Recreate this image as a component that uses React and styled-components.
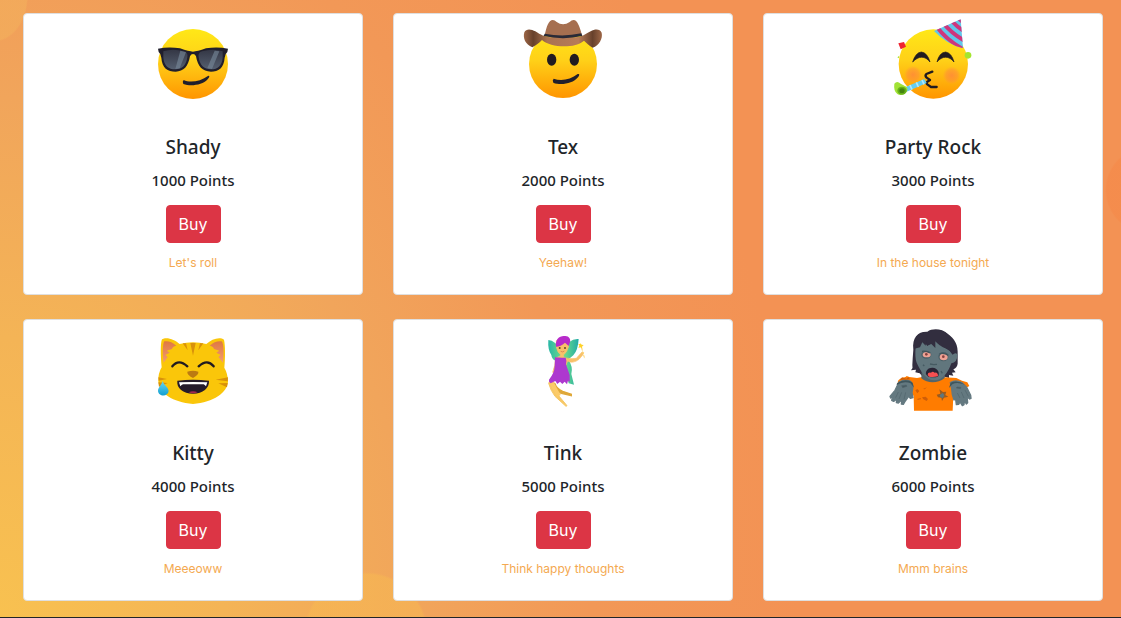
import React from "react";
import styled, { createGlobalStyle } from "styled-components";

const GlobalStyle = createGlobalStyle`
  *, *::before, *::after { box-sizing: border-box; }
  body {
    margin: 0;
    color: #212529;
    font-family: "Noto Sans", "Open Sans", sans-serif;
  }
`;

const Page = styled.div`
  background:
    radial-gradient(ellipse 34px 46px at -6px -4px, rgba(243, 176, 92, 0.6) 96%, transparent),
    radial-gradient(circle 44px at calc(100% + 28px) 190px, rgba(245, 138, 74, 0.7) 96%, transparent),
    radial-gradient(circle 62px at 366px calc(100% + 16px), rgba(248, 188, 80, 0.45) 96%, transparent),
    radial-gradient(ellipse 800px 1000px at 0 100%, #f8c150 0, #f4b456 28%, #f1a55b 52%, #f29857 74%, #f39254 100%);
`;

const Shop = styled.main`
  display: grid;
  grid-template-columns: repeat(3, 1fr);
  gap: 24px 30px;
  padding: 13px 18px 16px 23px;
`;

const Card = styled.article`
  display: flex;
  flex-direction: column;
  align-items: center;
  padding-bottom: 22px;
  background: #fff;
  border: 1px solid #dfdfdf;
  border-radius: 4px;
  text-align: center;
`;

const Picture = styled.svg`
  display: block;
  width: 96px;
  height: 96px;
`;

const Name = styled.h2`
  margin: 25px 0 0;
  font-size: 19px;
  font-weight: 500;
  line-height: 24px;
`;

const Price = styled.p`
  margin: 11px 0 0;
  font-size: 15px;
  font-weight: 500;
  line-height: 20px;
`;

const BuyButton = styled.button`
  width: 55px;
  height: 38px;
  margin-top: 15px;
  padding: 0;
  border: 1px solid #dc3545;
  border-radius: 4px;
  background: #dc3545;
  color: #fff;
  font-family: Inter, sans-serif;
  font-size: 16px;
  line-height: 24px;
  cursor: pointer;
`;

const Motto = styled.p`
  margin: 11px 0 0;
  color: #f4a951;
  font-family: Inter, sans-serif;
  font-size: 12px;
  line-height: 18px;
`;

const Footer = styled.footer`
  height: 1px;
  background: #212529;
`;

const FaceGradient = ({ id }) => (
  <defs>
    <linearGradient id={id} x1="0" y1="0" x2="0" y2="1">
      <stop offset="0" stopColor="#ffe817" />
      <stop offset="0.45" stopColor="#ffd018" />
      <stop offset="1" stopColor="#ff9500" />
    </linearGradient>
  </defs>
);

const Shady = () => (
  <Picture viewBox="15 12 288 288" role="img" aria-label="Face with sunglasses">
    <FaceGradient id="shadyFace" />
    <defs>
      <linearGradient id="lens" x1="0" y1="0" x2="0" y2="1">
        <stop offset="0" stopColor="#343745" />
        <stop offset="1" stopColor="#555f70" />
      </linearGradient>
    </defs>
    <circle cx="159" cy="162" r="105" fill="url(#shadyFace)" />
    <path d="M54 116Q86 110 120 115Q147 125 159 125Q171 125 198 115Q232 110 264 116L262 126Q256 130 254 143C252 174 235 185 213 185C187 185 173 169 168 139Q165 132 159 132Q153 132 150 139C145 169 131 185 107 185C83 185 66 174 64 143Q62 130 56 126Z" fill="#211f2c" />
    <path d="M70 124Q98 115 132 124Q145 128 142 142C139 165 126 178 107 178C84 178 72 166 70 143Z" fill="url(#lens)" />
    <path d="M248 124Q220 115 186 124Q173 128 176 142C179 165 192 178 213 178C234 178 246 166 248 143Z" fill="url(#lens)" />
    <path d="M121 122L138 127L119 175L106 177ZM224 122L238 124L216 177L202 174Z" fill="#758596" opacity=".65" />
    <path d="M131 210C149 219 181 215 205 197Q212 197 203 208C187 226 151 230 130 222Q126 215 131 210Z" fill="#211f2c" />
  </Picture>
);

const Tex = () => (
  <Picture viewBox="15 12 288 288" role="img" aria-label="Cowboy face">
    <FaceGradient id="texFace" />
    <defs>
      <linearGradient id="brim">
        <stop offset="0" stopColor="#9d6646" />
        <stop offset="0.12" stopColor="#67412c" />
        <stop offset="0.3" stopColor="#aa7351" />
        <stop offset="0.7" stopColor="#b77b58" />
        <stop offset="0.88" stopColor="#67412c" />
        <stop offset="1" stopColor="#9d6646" />
      </linearGradient>
    </defs>
    <circle cx="159" cy="162" r="102" fill="url(#texFace)" />
    <path d="M67 112C46 104 38 84 43 67C49 54 65 58 76 64C93 75 103 80 121 82H197C216 82 226 72 242 64C255 56 270 56 275 68C279 85 268 106 248 113C236 105 230 100 222 92C196 116 122 114 96 90C88 98 80 105 67 112Z" fill="url(#brim)" />
    <path d="M104 77C108 59 112 38 124 31Q132 28 140 36Q159 50 179 36Q187 28 195 31C206 38 212 61 216 76Q159 93 104 77Z" fill="#a66f50" />
    <path d="M104 71Q159 82 214 70L217 78Q159 91 101 78Z" fill="#292a37" />
    <ellipse cx="125" cy="149" rx="14" ry="18" fill="#211b20" />
    <ellipse cx="193" cy="149" rx="14" ry="18" fill="#211b20" />
    <path d="M131 206C153 214 182 209 203 192Q212 190 204 202C188 222 151 227 130 218Q126 210 131 206Z" fill="#211f2c" />
  </Picture>
);

const PartyRock = () => (
  <Picture viewBox="15 12 288 288" role="img" aria-label="Partying face">
    <FaceGradient id="partyFace" />
    <defs>
      <clipPath id="partyHat"><path d="M242 28L249 115Q199 102 162 63Z" /></clipPath>
      <radialGradient id="blush">
        <stop offset="0" stopColor="#ff8240" stopOpacity=".75" />
        <stop offset=".65" stopColor="#ff8b3d" stopOpacity=".5" />
        <stop offset="1" stopColor="#ff9640" stopOpacity="0" />
      </radialGradient>
    </defs>
    <circle cx="160" cy="162" r="104" fill="url(#partyFace)" />
    <circle cx="99" cy="194" r="27" fill="url(#blush)" />
    <circle cx="215" cy="196" r="27" fill="url(#blush)" />
    <g clipPath="url(#partyHat)">
      <path d="M160 25H252V118H160Z" fill="#60c7ea" />
      <path d="M170 50Q198 88 246 116M190 40Q214 70 256 94M212 30Q232 52 256 66M232 22L256 42" fill="none" stroke="#ce367c" strokeWidth="12" />
    </g>
    <path d="M55 100L72 96L78 110L62 118Z" fill="#ef2430" />
    <circle cx="264" cy="136" r="10" fill="#a4e52f" />
    <path d="M52 142L57 138V145Z" fill="#a4e52f" />
    <path d="M98 156Q107 127 124 126Q142 128 150 156C136 137 115 137 98 156ZM171 156Q178 127 197 126Q215 129 222 156C208 137 186 137 171 156Z" fill="#211b20" stroke="#211b20" strokeWidth="2" strokeLinejoin="round" />
    <path d="M157 185L139 192Q134 197 140 203L150 210L142 215Q137 219 143 224L153 231H170" fill="none" stroke="#211b20" strokeWidth="7" strokeLinecap="round" strokeLinejoin="round" />
    <path d="M72 233L133 207L140 219L78 246Z" fill="#65cdf0" />
    <path d="M90 225L96 239M109 217L115 231M126 210L132 223" stroke="#b2e9fa" strokeWidth="5" />
    <path d="M43 221Q51 211 62 221L79 230Q87 239 77 248Q63 260 52 252Q40 243 43 221Z" fill="#a1e236" />
    <ellipse cx="66" cy="242" rx="14" ry="12" fill="#66b119" />
    <ellipse cx="66" cy="242" rx="8" ry="7" fill="#43840e" />
  </Picture>
);

const Kitty = () => (
  <Picture viewBox="15 0 288 288" role="img" aria-label="Laughing cat">
    <defs>
      <linearGradient id="earInside" x1="0" y1="0" x2="0" y2="1">
        <stop offset="0" stopColor="#df7841" />
        <stop offset="1" stopColor="#f29b73" />
      </linearGradient>
      <linearGradient id="drop" x1="0" y1="0" x2="0" y2="1">
        <stop offset="0" stopColor="#68d9f2" />
        <stop offset="1" stopColor="#139fd1" />
      </linearGradient>
    </defs>
    <path d="M66 58C78 49 105 58 119 72Q159 61 199 72C215 57 239 49 252 59C256 77 256 113 253 143Q263 160 264 184C262 219 221 247 159 252C97 247 59 220 55 184Q54 160 65 142C62 105 61 69 66 58Z" fill="#fac60a" />
    <path d="M73 64Q91 61 109 77Q97 80 96 87L80 92L89 98L76 105L83 111L71 128C67 99 68 70 73 64ZM245 64Q227 61 209 77Q221 80 222 87L238 92L229 98L242 105L235 111L249 128C252 99 251 70 245 64Z" fill="url(#earInside)" />
    <path d="M151 69H167L159 107ZM128 70H138L143 91ZM180 70H190L175 91ZM55 172L81 177L56 182ZM55 187L83 189L57 200ZM264 172L227 179L263 184ZM263 189L235 190L261 202Z" fill="#d8910b" />
    <path d="M97 139Q116 115 142 139M176 139Q202 115 221 139" fill="none" stroke="#211b20" strokeWidth="7" strokeLinecap="round" />
    <path d="M142 155Q159 149 175 155Q177 163 159 174Q140 164 142 155Z" fill="#bb7a12" />
    <path d="M112 182Q159 177 207 182C208 204 189 221 159 221C129 221 109 204 112 182Z" fill="#241b2b" />
    <path d="M117 187Q159 185 202 187L198 199Q194 195 191 193H129Q125 195 121 199Z" fill="#fff" />
    <path d="M146 217Q159 211 173 217Q159 223 146 217Z" fill="#a32852" />
    <path d="M68 182C67 192 54 202 54 212C55 231 84 231 86 213C84 199 70 195 68 182Z" fill="url(#drop)" />
  </Picture>
);

const Tink = () => (
  <Picture viewBox="15 0 288 288" role="img" aria-label="Fairy">
    <defs>
      <linearGradient id="wings">
        <stop offset="0" stopColor="#28b7a7" />
        <stop offset=".5" stopColor="#72df87" />
        <stop offset="1" stopColor="#22aba8" />
      </linearGradient>
    </defs>
    <path d="M115 60Q135 60 154 94Q178 54 206 57Q204 91 190 106Q180 115 174 118Q190 140 184 162L192 194L176 190L155 115L140 164Q129 157 132 142L143 125Q125 120 124 105Q113 90 115 60Z" fill="url(#wings)" />
    <path d="M139 62Q156 51 174 65L176 79Q171 98 160 105L162 113Q185 118 199 115L216 96L221 98L218 105L207 118Q189 132 173 123L168 135H139L136 158L128 157L134 137L137 114L151 108V103Q142 97 139 80Z" fill="#f8c16a" stroke="#f8c16a" strokeWidth="2" />
    <path d="M138 80C135 59 148 47 163 48C176 46 183 57 180 66L176 78L165 68Q152 80 138 80Z" fill="#b72bca" />
    <circle cx="149" cy="84" r="3" fill="#604028" /><circle cx="165" cy="84" r="3" fill="#604028" />
    <path d="M152 94Q158 98 163 93" stroke="#cb6c49" strokeWidth="2" fill="none" />
    <path d="M135 191Q139 205 158 214L184 223L184 227L154 220Q137 216 134 202L126 186Z" fill="#dfa839" stroke="#dfa839" strokeWidth="4" />
    <path d="M119 184Q123 201 145 226L171 257L168 259L135 229Q122 212 116 190Z" fill="#f7c865" stroke="#f7c865" strokeWidth="3" />
    <path d="M125 187Q134 205 147 228" stroke="#fccb68" strokeWidth="12" fill="none" />
    <path d="M135 112Q150 114 167 113Q171 123 168 133L179 165V187L174 182L171 193L164 185L157 192L150 185L142 192L136 183L122 190Q115 185 117 179Q133 160 134 139Z" fill="#ad38cf" />
    <path d="M211 69L215 74L221 75L216 80L217 86L211 82L205 84L208 77L205 72H211Z" fill="#ffd228" />
    <path d="M215 84L224 116" stroke="#ffd66b" strokeWidth="3" strokeDasharray="8 3" />
  </Picture>
);

const Zombie = () => (
  <Picture viewBox="15 0 288 288" role="img" aria-label="Zombie">
    <path d="M93 151Q100 143 97 135Q98 113 100 89C96 51 114 34 142 35C158 24 186 26 203 41C224 56 235 74 233 105V131Q231 144 220 148L227 157L216 158L220 167L207 165L207 174L194 170L127 169L119 160L106 157L108 149Z" fill="#322e3f" />
    <path d="M53 187C56 171 76 175 80 168L88 171L111 174L127 171Q160 188 193 172L229 174L246 182L262 187L268 198L241 213L220 226L218 272H102L101 228L91 214L62 213Z" fill="#ff7c00" />
    <path d="M125 151L193 150L194 174C173 191 143 191 124 175Z" fill="#54656b" />
    <path d="M107 78Q115 62 128 60L142 78L165 63L209 93L218 104Q229 95 233 105Q231 128 214 130C204 160 185 182 164 181C138 182 121 151 110 128Q104 115 107 78Z" fill="#61767d" />
    <path d="M103 86C98 50 119 34 142 37L137 77L127 67L120 82Z" fill="#322e3f" />
    <path d="M142 76Q132 57 150 35C188 17 224 53 231 91L226 98L217 103Q213 90 200 86Q176 78 166 63V84L154 72Z" fill="#322e3f" />
    <ellipse cx="139" cy="104" rx="15" ry="12" fill="#4a6068" />
    <ellipse cx="190" cy="110" rx="15" ry="14" fill="#4a6068" />
    <ellipse cx="140" cy="104" rx="12" ry="8" fill="#efa294" />
    <ellipse cx="191" cy="111" rx="12" ry="10" fill="#efa294" />
    <circle cx="139" cy="103" r="4" fill="#864140" /><circle cx="190" cy="110" r="4" fill="#864140" />
    <path d="M126 94Q139 92 150 99M179 101Q193 98 205 106" stroke="#41555c" strokeWidth="4" fill="none" />
    <path d="M150 132L161 134L171 133M129 134L133 138M183 153L187 160" stroke="#465b62" strokeWidth="4" fill="none" />
    <path d="M138 163C136 151 146 142 158 143C173 144 181 158 174 170Q160 174 145 170Z" fill="#292435" />
    <path d="M143 165Q143 156 153 158Q158 152 164 158Q174 156 174 169Q159 173 147 170Z" fill="#f64f51" />
    <path d="M57 186Q75 176 92 184Q102 196 96 218L99 233L91 235L86 229L76 243L70 253L64 252L66 239L55 249L49 248L51 237L41 244L35 241L39 229L32 234L30 229L45 211Z" fill="#647980" stroke="#647980" strokeWidth="4" strokeLinejoin="round" />
    <path d="M211 188Q226 178 246 188L260 202L272 226L273 235L269 237L261 230L263 248L259 252L253 243L252 254L247 257L240 246L236 253L229 254L227 238L222 240L217 224L215 205Z" fill="#647980" stroke="#647980" strokeWidth="4" strokeLinejoin="round" />
    <path d="M51 190Q77 173 98 188L102 203L92 190Q72 181 50 195ZM207 204L212 188Q232 178 255 194Q230 184 217 193Z" fill="#3e555c" />
    <path d="M65 197L79 195L81 199L68 203ZM231 201L243 202L241 206L229 204ZM55 216L47 233M65 217L57 237M77 217L72 238M232 219L240 234M244 216L252 234M255 210L265 229" stroke="#50646b" strokeWidth="2" fill="#46595f" />
    <path d="M170 224L181 221L178 208L189 216L199 215L196 225L205 230L192 233L186 243L184 233L174 232Z" fill="#9a5b20" />
    <path d="M179 225L188 219L193 225L189 234L181 232Z" fill="#60777d" />
    <path d="M106 211L112 207L118 213L112 220ZM126 232L137 230L144 237L140 243L130 238ZM113 236L123 234L122 238L112 240ZM129 207L141 202L134 208ZM66 172L79 176L85 171L90 178L60 180Z" fill="#cf5e08" />
  </Picture>
);

const items = [
  { name: "Shady", points: 1000, motto: "Let's roll", Art: Shady },
  { name: "Tex", points: 2000, motto: "Yeehaw!", Art: Tex },
  { name: "Party Rock", points: 3000, motto: "In the house tonight", Art: PartyRock },
  { name: "Kitty", points: 4000, motto: "Meeeoww", Art: Kitty },
  { name: "Tink", points: 5000, motto: "Think happy thoughts", Art: Tink },
  { name: "Zombie", points: 6000, motto: "Mmm brains", Art: Zombie },
];

export default function App() {
  return (
    <Page>
      <GlobalStyle />
      <Shop>
        {items.map(({ name, points, motto, Art }) => (
          <Card key={name}>
            <Art />
            <Name>{name}</Name>
            <Price>{points} Points</Price>
            <BuyButton type="button">Buy</BuyButton>
            <Motto>{motto}</Motto>
          </Card>
        ))}
      </Shop>
      <Footer />
    </Page>
  );
}
